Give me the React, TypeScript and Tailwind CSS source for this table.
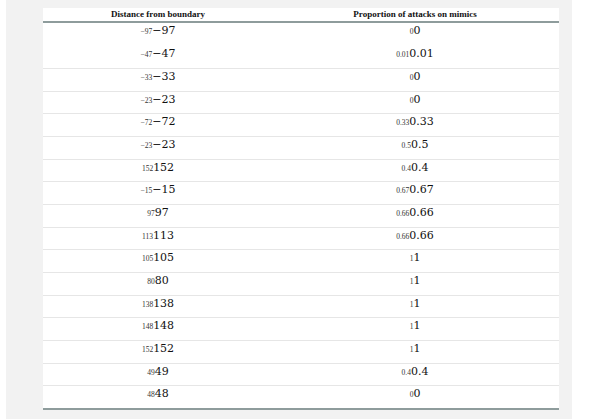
const rows: [string, string][] = [
  ["−97", "0"],
  ["−47", "0.01"],
  ["−33", "0"],
  ["−23", "0"],
  ["−72", "0.33"],
  ["−23", "0.5"],
  ["152", "0.4"],
  ["−15", "0.67"],
  ["97", "0.66"],
  ["113", "0.66"],
  ["105", "1"],
  ["80", "1"],
  ["138", "1"],
  ["148", "1"],
  ["152", "1"],
  ["49", "0.4"],
  ["48", "0"],
];

function MathNum({ value }: { value: string }) {
  return (
    <span className="whitespace-nowrap">
      <span className="font-['Liberation_Serif',serif] text-[7.5px] text-[#333]">{value}</span>
      <span className="font-['DejaVu_Serif',serif] text-[11px] text-[#111]">{value}</span>
    </span>
  );
}

export default function App() {
  return (
    <div className="w-[595px] h-[419px] bg-white font-['Liberation_Serif',serif]">
      <div className="ml-[6px] w-[566px] h-full bg-[#f2f2f2] pt-[8px] pl-[37px]">
        <div className="w-[516px] bg-white border-b-2 border-[#8e9c9c]">
          <div className="grid grid-cols-2 h-[15px] border-b-2 border-[#8e9c9c] text-[9px] font-bold text-[#111] leading-[13px]">
            <div className="pr-[28px] text-center">Distance from boundary</div>
            <div className="pr-[30px] text-center">Proportion of attacks on mimics</div>
          </div>
          {rows.map(([d, p], i) => (
            <div
              key={i}
              className={
                i === 0 || i === 1
                  ? "grid grid-cols-2 h-[22.5px] leading-[12px]"
                  : "grid grid-cols-2 h-[22.67px] border-t border-[#e6e6e6] leading-[12px]"
              }
            >
              <div className="pr-[28px] text-center">
                <MathNum value={d} />
              </div>
              <div className="pr-[30px] text-center">
                <MathNum value={p} />
              </div>
            </div>
          ))}
        </div>
      </div>
    </div>
  );
}
